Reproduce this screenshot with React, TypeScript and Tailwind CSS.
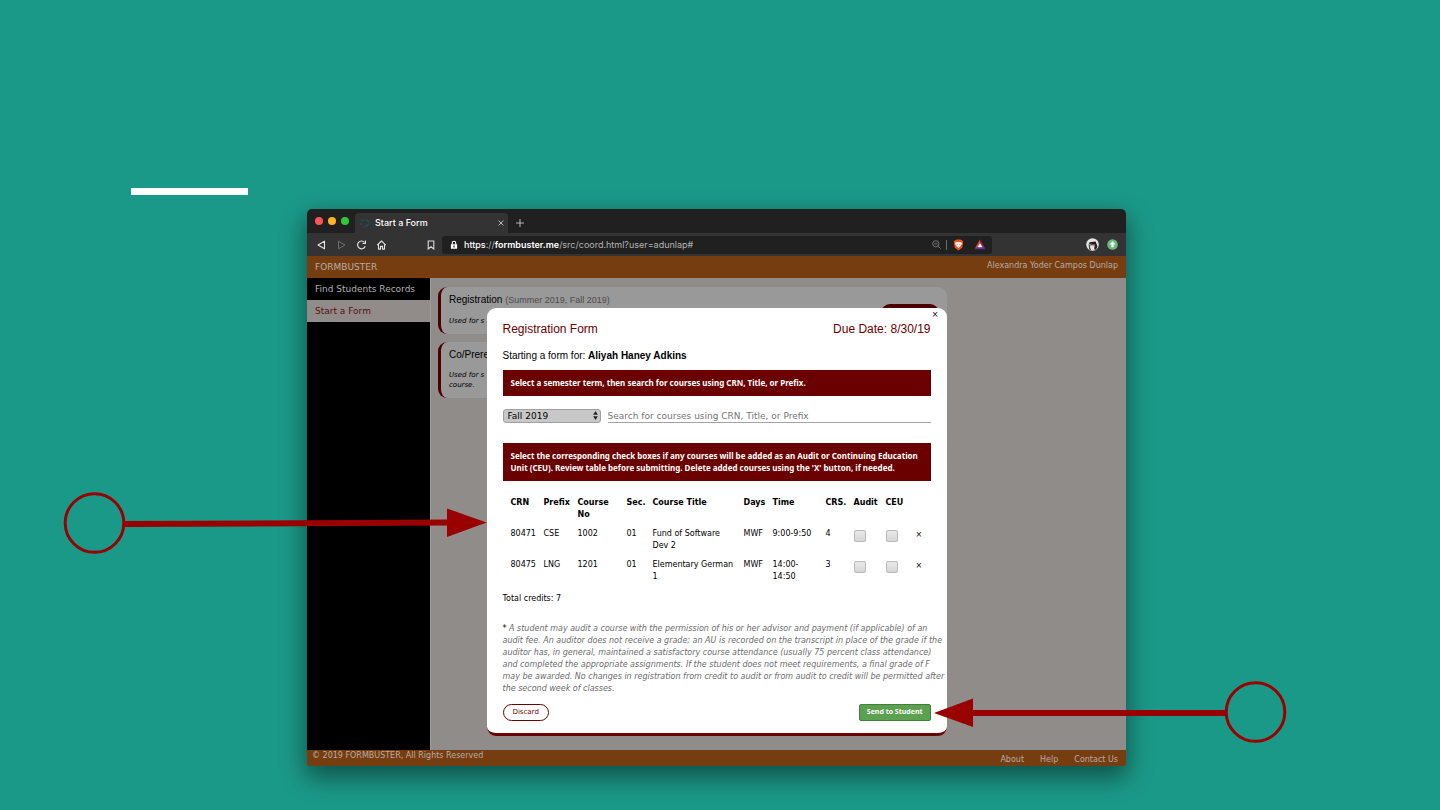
import type { ReactNode } from "react";

const sans = "font-['Liberation_Sans',Arial,sans-serif]";
const wide = "font-['DejaVu_Sans',Verdana,sans-serif]";
const strongText = "font-['Noto_Sans',sans-serif] font-bold";
const ui = "font-['Inter',sans-serif]";

type Course = {
  crn: string;
  prefix: string;
  no: string;
  sec: string;
  title: ReactNode;
  days: string;
  time: ReactNode;
  credits: number;
};

const courses: Course[] = [
  { crn: "80471", prefix: "CSE", no: "1002", sec: "01", title: <>Fund of Software<br />Dev 2</>, days: "MWF", time: "9:00-9:50", credits: 4 },
  { crn: "80475", prefix: "LNG", no: "1201", sec: "01", title: <>Elementary German<br />1</>, days: "MWF", time: <>14:00-<br />14:50</>, credits: 3 },
];

const columns = [
  { label: "CRN", width: "w-[33px]" },
  { label: "Prefix", width: "w-[34px]" },
  { label: "Course No", width: "w-[49px]" },
  { label: "Sec.", width: "w-[26px]" },
  { label: "Course Title", width: "w-[91px]" },
  { label: "Days", width: "w-[29px]" },
  { label: "Time", width: "w-[53px]" },
  { label: "CRS.", width: "w-[28px]" },
  { label: "Audit", width: "w-[32px]" },
  { label: "CEU", width: "w-[30px]" },
  { label: "", width: "w-[23px]" },
];

function TabStrip() {
  return (
    <div className="flex h-6 items-end bg-[#202020] pl-2">
      <div className="flex h-6 w-10 items-center gap-[5px]">
        <span className="size-2 rounded-full bg-[#fb5750]" />
        <span className="size-2 rounded-full bg-[#fdb32a]" />
        <span className="size-2 rounded-full bg-[#30c83c]" />
      </div>
      <div className="flex h-5 w-[153px] items-center rounded-t bg-[#333333] pr-1 pl-[5px]">
        <svg viewBox="0 0 10 10" className="size-[10px]" fill="none" stroke="#1c5560" strokeWidth="1.2">
          <path d="M1 2.2h3M1 7V4.5M6 1.5 9 4M9 5.5 5.5 9M3 9h1" />
        </svg>
        <span className="flex-1 pl-[5px] text-[9px] font-medium text-white">Start a Form</span>
        <button type="button" aria-label="Close tab" className="flex size-[7px] items-center justify-center">
          <svg viewBox="0 0 6 6" className="size-[6px]" stroke="#c8c8c8" strokeWidth="0.9">
            <path d="M.6.6 5.4 5.4M5.4.6.6 5.4" />
          </svg>
        </button>
      </div>
      <button type="button" aria-label="New tab" className="ml-2 flex h-5 items-center">
        <svg viewBox="0 0 8 8" className="size-2" stroke="#c8c8c8" strokeWidth="0.9">
          <path d="M4 0v8M0 4h8" />
        </svg>
      </button>
    </div>
  );
}

function Toolbar() {
  return (
    <div className="flex h-[23px] items-center bg-[#333333] pr-2 pl-[9px]">
      <div className="flex items-center gap-[10px]">
        <button type="button" aria-label="Back">
          <svg viewBox="0 0 10 10" className="block size-[10px]" fill="none" stroke="#e4e4e4" strokeWidth="1.1" strokeLinejoin="round">
            <path d="M8.5 1.2v7.6L2 5z" />
          </svg>
        </button>
        <button type="button" aria-label="Forward">
          <svg viewBox="0 0 10 10" className="block size-[10px]" fill="none" stroke="#6c6c6c" strokeWidth="1" strokeLinejoin="round">
            <path d="M2.5 1.2v7.6L9 5z" />
          </svg>
        </button>
        <button type="button" aria-label="Reload">
          <svg viewBox="0 0 10 10" className="block size-[10px]" fill="none" stroke="#e4e4e4" strokeWidth="1.1">
            <path d="M9.2 6.2A3.9 3.9 0 1 1 8.5 2.4M9.5.6v2.9h-3" />
          </svg>
        </button>
        <button type="button" aria-label="Home">
          <svg viewBox="0 0 10 10" className="block size-[10px]" fill="none" stroke="#e4e4e4" strokeWidth="1.1" strokeLinejoin="round">
            <path d="M1.2 5.2 5.5 1l4.3 4.2M2.5 4.5v4.6h2V6.4h2v2.7h2V4.5" />
          </svg>
        </button>
      </div>
      <button type="button" aria-label="Bookmark" className="ml-[41px]">
        <svg viewBox="0 0 8 10" className="block h-[10px] w-2" fill="none" stroke="#dcdcdc" strokeWidth="1.1">
          <path d="M1.2 1h5.6v8L4 6.8 1.2 9z" />
        </svg>
      </button>
      <div className="ml-[7px] flex h-[18px] flex-1 items-center rounded-[3px] bg-[#202020] pr-[6px] pl-2">
        <svg viewBox="0 0 8 10" className="h-[10px] w-2" fill="none">
          <path d="M2.3 4.5V3a1.7 1.7 0 0 1 3.4 0v1.5" stroke="#fff" strokeWidth="1.1" />
          <path fillRule="evenodd" d="M.9 4.2h6.2v4.6H.9zM3.4 5.6v1.9h1.2V5.6z" fill="#fff" />
        </svg>
        <span className="flex-1 pl-[6px] text-[9px] whitespace-nowrap text-[#b4b4b4]">
          <span className="font-medium text-white">https</span>://
          <span className="font-semibold text-white">formbuster.me</span>/src/coord.html?user=adunlap#
        </span>
        <svg viewBox="0 0 9 9" className="size-[9px]" fill="none" stroke="#8c8c8c" strokeWidth="0.8">
          <circle cx="3.8" cy="3.8" r="3.1" />
          <path d="M2.3 3.8h3M6.1 6.1 8.6 8.6" />
        </svg>
        <span className="ml-[5px] h-[10px] w-px bg-[#6a6a6a]" />
        <svg viewBox="0 0 11 12" className="ml-[6px] h-3 w-[11px]">
          <path d="M2.4 1 4 .6h3L8.6 1l1.700 1.600-.5 1 .3 1-1 4.100L5.500 11.400 1.900 8.700.9 4.600l.3-1-.5-1z" fill="#f0501e" />
          <path d="M2.500 3.400 4 2.900l1.500.4L7 2.900l1.500.5.5 1.300-1.500 2-.3.9-1.700 1.500-1.700-1.500-.3-.9L2 4.700z" fill="#fff" />
          <path d="M3.400 4.500 4.700 5v.7H4zM7.600 4.500 6.300 5v.7H7zM4.800 7.200h1.400l-.7.6z" fill="#f0501e" />
        </svg>
        <svg viewBox="0 0 12 11" className="ml-[10px] h-[11px] w-3">
          <path d="M6 .5.4 10.3 3.500 8.200 6 4z" fill="#e8422a" />
          <path d="M6 .5 11.600 10.300 8.500 8.200 6 4z" fill="#9b2268" />
          <path d="M.4 10.300h11.200L8.500 8.200h-5z" fill="#5a3599" />
          <path d="M6 4 3.500 8.200h5z" fill="#fff" />
        </svg>
      </div>
      <div className="flex items-center gap-2 pl-[94px]">
        <svg viewBox="0 0 13 13" className="size-[13px]">
          <circle cx="6.5" cy="6.5" r="6.3" fill="#e4e4e4" />
          <path d="M2.800 5.800 3.600 4.200 9.600 3.600 10.600 6.200z" fill="#1f1a18" />
          <path d="M4.200 6h5.200v1.600H4.200z" fill="#7a5844" />
          <path d="M2.600 6.200h1.200l.4 3.200L5.200 12.400 3.200 11.600z" fill="#4a4340" />
          <path d="M9 6h1.700l.7 2.800-1 2.300-1.600 1.200-.6-2.200z" fill="#282321" />
        </svg>
        <svg viewBox="0 0 11 11" className="size-[11px]">
          <circle cx="5.5" cy="5.5" r="5.3" fill="#68b981" />
          <path d="M5.500 2.200 8.500 5.500H6.600v2.800H4.400V5.500H2.500z" fill="#fff" />
        </svg>
      </div>
    </div>
  );
}

function FormCard({ title, terms, note, action }: { title: string; terms?: string; note: ReactNode; action?: boolean }) {
  return (
    <article className="flex justify-between rounded-[9px] border-l-[3px] border-[#4d0000] bg-[#999999] px-2 pb-2">
      <div>
        <h2 className={`pt-[5px] text-[10px] leading-[15px] text-black ${sans}`}>
          {title} {terms && <span className="text-[9px] text-[#4c4c4c]">{terms}</span>}
        </h2>
        <p className="pt-2 text-[7px] leading-[10px] text-black italic">{note}</p>
      </div>
      {action && (
        <button type="button" aria-label="Start registration" className="mt-[17px] h-[18px] w-[58px] rounded-[9px] bg-[#4a0000]" />
      )}
    </article>
  );
}

function Site() {
  return (
    <div className={`flex flex-col [grid-area:1/1] ${wide}`}>
      <header className="flex h-[22px] justify-between bg-[#763e10] px-2 text-[#b5aca5]">
        <h1 className="text-[9px] leading-[22px]">FORMBUSTER</h1>
        <span className="text-[8px] leading-5">Alexandra Yoder Campos Dunlap</span>
      </header>
      <div className="flex flex-1">
        <nav className="flex w-[123px] flex-col bg-black text-[9px] leading-[22px] whitespace-nowrap">
          <a href="#records" className="px-2 text-[#b0b0b0]">Find Students Records</a>
          <a href="#start" className="bg-[#918c8a] px-2 text-[#5c0d12]">Start a Form</a>
        </nav>
        <div className="flex-1 border-l border-[#a09c9a] bg-[#908c8a] pt-[9px] pl-[7px]">
          <div className="flex w-[74%] flex-col gap-2">
            <FormCard title="Registration" terms="(Summer 2019, Fall 2019)" note="Used for s" action />
            <FormCard title="Co/Prere" note={<>Used for s<br />course.</>} />
          </div>
        </div>
      </div>
      <footer className="flex h-4 justify-between rounded-b-[3px] bg-[#763e10] pr-2 pl-[5px] text-[8px] text-[#b5aca5]">
        <span className="leading-3">© 2019 FORMBUSTER, All Rights Reserved</span>
        <span className="flex gap-4 leading-5">
          <a href="#about">About</a>
          <a href="#help">Help</a>
          <a href="#contact">Contact Us</a>
        </span>
      </footer>
    </div>
  );
}

function Banner({ children }: { children: ReactNode }) {
  return <p className={`bg-[#6a0000] px-2 py-[7px] text-[8px] leading-3 text-white ${strongText}`}>{children}</p>;
}

function CourseTable() {
  return (
    <table className="mt-4 w-full table-fixed text-left text-[8px] leading-3 text-black">
      <thead>
        <tr className="align-top">
          {columns.map((c) => (
            <th key={c.label} scope="col" className={`pb-[7px] pl-2 font-bold ${c.width}`}>
              {c.label === "Course No" ? <>Course<br />No</> : <span className="whitespace-nowrap">{c.label}</span>}
            </th>
          ))}
        </tr>
      </thead>
      <tbody>
        {courses.map((c) => (
          <tr key={c.crn} className="align-top whitespace-nowrap">
            <td className="pl-2">{c.crn}</td>
            <td className="pl-2">{c.prefix}</td>
            <td className="pl-2">{c.no}</td>
            <td className="pl-2">{c.sec}</td>
            <td className="pb-[7px] pl-2">{c.title}</td>
            <td className="pl-2">{c.days}</td>
            <td className="pl-2">{c.time}</td>
            <td className="pl-2">{c.credits}</td>
            {["Audit", "CEU"].map((kind) => (
              <td key={kind} className="pt-[2px] pl-2">
                <input
                  type="checkbox"
                  aria-label={`${kind} ${c.crn}`}
                  className="block size-3 appearance-none rounded-[2px] border border-[#b9b9b9] bg-linear-to-b from-[#e9e9e9] to-[#d6d6d6]"
                />
              </td>
            ))}
            <td className="pt-px pl-2">
              <button type="button" aria-label={`Delete ${c.crn}`} className="block">×</button>
            </td>
          </tr>
        ))}
      </tbody>
    </table>
  );
}

function LeftCallout() {
  return (
    <svg viewBox="0 0 424 62" className="absolute top-[184px] right-full h-[62px] w-[424px]" aria-hidden="true">
      <circle cx="31.5" cy="31" r="29.3" fill="none" stroke="#990000" strokeWidth="3" />
      <path d="M61 32 388 30.500" stroke="#990000" strokeWidth="6" />
      <path d="M384 16.500 423.500 30.500 384 45z" fill="#990000" />
    </svg>
  );
}

function RightCallout() {
  return (
    <svg viewBox="0 0 354 62" className="absolute top-[373px] left-[446px] h-[62px] w-[354px]" aria-hidden="true">
      <circle cx="322.5" cy="31" r="29.3" fill="none" stroke="#990000" strokeWidth="3" />
      <path d="M38 32H293" stroke="#990000" strokeWidth="6" />
      <path d="M40 17.500 1 32 40 46z" fill="#990000" />
    </svg>
  );
}

function RegistrationDialog() {
  return (
    <div className={`relative mt-[52px] mb-[30px] w-[460px] self-start justify-self-center [grid-area:1/1] ${wide}`}>
      <form
        role="dialog"
        aria-labelledby="dialog-title"
        onSubmit={(e) => e.preventDefault()}
        className="rounded-[9px] border-b-[3px] border-[#6a0000] bg-white px-4 pb-3"
      >
        <div className="-mr-2 flex h-[14px] justify-end">
          <button type="button" aria-label="Close" className="text-[8px] leading-[14px] text-black">×</button>
        </div>
        <div className={`flex justify-between text-[12px] leading-[14px] text-[#6a0000] ${sans}`}>
          <h2 id="dialog-title">Registration Form</h2>
          <p>Due Date: 8/30/19</p>
        </div>
        <p className={`pt-[13px] pb-[7px] text-[10px] leading-[14px] text-black ${sans}`}>
          Starting a form for: <strong>Aliyah Haney Adkins</strong>
        </p>
        <Banner>Select a semester term, then search for courses using CRN, Title, or Prefix.</Banner>
        <div className="mt-[13px] mb-5 flex items-start gap-[7px]">
          <div className="relative w-[98px]">
            <select
              aria-label="Semester"
              className="block h-[14px] w-full appearance-none rounded-[3px] border border-[#a0a0a0] bg-[#c8c8c8] pl-1 text-[9px] leading-3 text-black"
            >
              <option>Fall 2019</option>
            </select>
            <svg viewBox="0 0 5 9" className="pointer-events-none absolute top-[2px] right-[3px] h-[9px] w-[5px]">
              <path d="M2.5 0 4.8 3.7H.2zM2.5 9 .2 5.3h4.6z" fill="#222" />
            </svg>
          </div>
          <input
            type="text"
            aria-label="Search for courses"
            placeholder="Search for courses using CRN, Title, or Prefix"
            className="h-[14px] flex-1 border-b border-[#a3a3a3] text-[9px] leading-[13px] placeholder:text-[#757575]"
          />
        </div>
        <Banner>
          Select the corresponding check boxes if any courses will be added as an Audit or Continuing Education
          <br />
          Unit (CEU). Review table before submitting. Delete added courses using the 'X' button, if needed.
        </Banner>
        <CourseTable />
        <p className="pt-[3px] text-[8px] leading-3 text-black">Total credits: 7</p>
        <p className="pt-[18px] text-[8px] leading-3 whitespace-nowrap text-[#6b6b6b] italic">
          <span className="text-black not-italic">*</span> A student may audit a course with the permission of his or her advisor and payment (if applicable) of an
          <br />
          audit fee. An auditor does not receive a grade; an AU is recorded on the transcript in place of the grade if the
          <br />
          auditor has, in general, maintained a satisfactory course attendance (usually 75 percent class attendance)
          <br />
          and completed the appropriate assignments. If the student does not meet requirements, a final grade of F
          <br />
          may be awarded. No changes in registration from credit to audit or from audit to credit will be permitted after
          <br />
          the second week of classes.
        </p>
        <div className="flex justify-between pt-[9px]">
          <button type="button" className="h-[17px] rounded-full border border-[#6a0000] px-[9px] text-[7px] text-[#6a0000]">
            Discard
          </button>
          <button type="submit" className={`h-[17px] rounded-[2px] border border-[#41803a] bg-[#5ba150] px-[7px] text-[7px] text-white ${strongText}`}>
            Send to Student
          </button>
        </div>
      </form>
      <LeftCallout />
      <RightCallout />
    </div>
  );
}

export default function App() {
  return (
    <main className={`min-h-screen overflow-x-clip bg-[#1b9988] pt-[188px] pb-11 ${ui}`}>
      <div className="ml-[131px] h-[7px] w-[117px] bg-white" />
      <section className="mt-[14px] mr-[314px] ml-[307px] rounded-[5px] shadow-[0_10px_24px_2px_rgba(0,0,0,0.45)]">
        <div className="overflow-hidden rounded-t-[5px]">
          <TabStrip />
          <Toolbar />
        </div>
        <div className="grid">
          <Site />
          <RegistrationDialog />
        </div>
      </section>
    </main>
  );
}
